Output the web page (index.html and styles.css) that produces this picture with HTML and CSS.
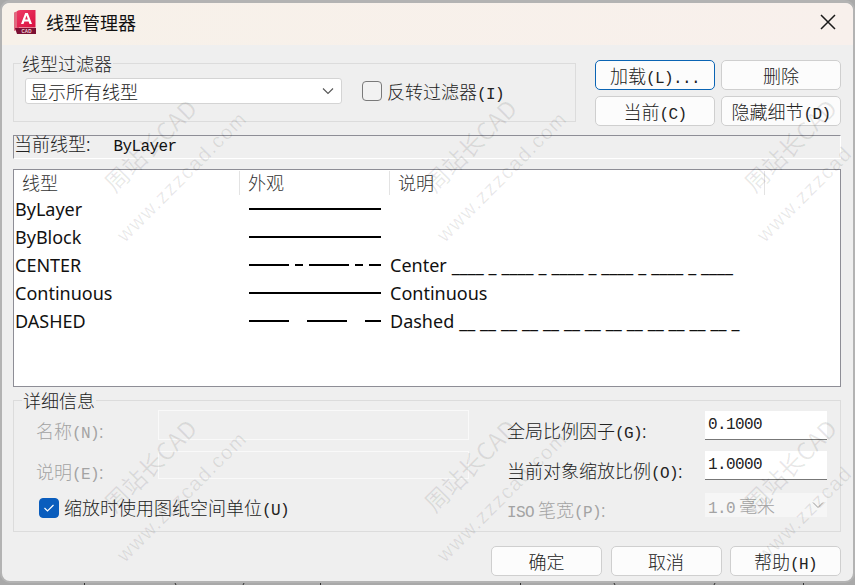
FILE: index.html
```html
<!DOCTYPE html>
<html lang="zh-CN">
<head>
<meta charset="utf-8">
<title>线型管理器</title>
<link rel="stylesheet" href="styles.css">
</head>
<body>
<div class="window">
  <header class="titlebar">
    <svg class="app-icon" width="22" height="24" viewBox="0 0 22 24">
      <defs><linearGradient id="red" x1="0" y1="0" x2="1" y2="1"><stop offset="0" stop-color="#ee3a66"/><stop offset="1" stop-color="#d9103f"/></linearGradient></defs>
      <path d="M0 2.5 L5 0.5 V19 L0 21 Z" fill="#e06a80"/>
      <path d="M3 1 L6 0 H21.5 V17.5 H3 Z" fill="url(#red)"/>
      <path d="M1 18 H22 V24 H3 Z" fill="#7c1033"/>
      <path d="M7 14 L11.2 3 h2.6 L18 14 h-2.5 l-.9-2.5 h-4.2 l-.9 2.5 Z M11.1 9.4 h2.8 L12.5 5.5 Z" fill="#fff" fill-rule="evenodd"/>
      <text x="12.5" y="23" class="app-icon-text">CAD</text>
    </svg>
    <span class="title-text">线型管理器</span>
    <svg class="close" width="16" height="16" viewBox="0 0 16 16"><path d="M1 1 L15 15 M15 1 L1 15" stroke="#1a1a1a" stroke-width="1.5" fill="none"/></svg>
  </header>

  <div class="body">
    <section class="top">
      <fieldset class="group filter">
        <legend>线型过滤器</legend>
        <div class="filter-row">
          <div class="select"><span>显示所有线型</span>
            <svg width="12" height="8" viewBox="0 0 12 8"><path d="M1 1.5 L6 6.5 L11 1.5" stroke="#555" stroke-width="1.1" fill="none"/></svg>
          </div>
          <label class="check"><span class="box"></span><span>反转过滤器<b class="l">(I)</b></span></label>
        </div>
      </fieldset>
      <div class="btn-grid">
        <button class="btn primary">加载<b class="l">(L)...</b></button>
        <button class="btn">删除</button>
        <button class="btn">当前<b class="l">(C)</b></button>
        <button class="btn">隐藏细节<b class="l">(D)</b></button>
      </div>
    </section>

    <div class="current">当前线型:<b class="l current-val">ByLayer</b></div>

    <section class="list">
      <div class="list-head">
        <div class="th">线型</div>
        <div class="th">外观</div>
        <div class="th">说明</div>
        <div class="th"></div>
      </div>
      <div class="row">
        <div class="name">ByLayer</div>
        <svg class="look" width="132" height="2"><path d="M0 1H132" class="ln"/></svg>
        <div class="desc"></div>
      </div>
      <div class="row">
        <div class="name">ByBlock</div>
        <svg class="look" width="132" height="2"><path d="M0 1H132" class="ln"/></svg>
        <div class="desc"></div>
      </div>
      <div class="row">
        <div class="name">CENTER</div>
        <svg class="look" width="132" height="2"><path d="M0 1H40M46 1H54M60 1H100M106 1H114M120 1H132" class="ln"/></svg>
        <div class="desc">Center ____ _ ____ _ ____ _ ____ _ ____ _ ____</div>
      </div>
      <div class="row">
        <div class="name">Continuous</div>
        <svg class="look" width="132" height="2"><path d="M0 1H132" class="ln"/></svg>
        <div class="desc">Continuous</div>
      </div>
      <div class="row">
        <div class="name">DASHED</div>
        <svg class="look" width="132" height="2"><path d="M0 1H40M58 1H98M116 1H132" class="ln"/></svg>
        <div class="desc">Dashed __ __ __ __ __ __ __ __ __ __ __ __ __ _</div>
      </div>
    </section>

    <fieldset class="group details">
      <legend>详细信息</legend>
      <div class="details-grid">
        <div class="details-left">
          <div class="field"><span class="flabel off">名称<b class="l">(N)</b>:</span><div class="ghost"></div></div>
          <div class="field"><span class="flabel off">说明<b class="l">(E)</b>:</span><div class="ghost"></div></div>
          <label class="check paper"><span class="box on"><svg width="12" height="10" viewBox="0 0 12 10"><path d="M1.5 5 L4.5 8 L10.5 2" stroke="#fff" stroke-width="1.2" fill="none"/></svg></span><span>缩放时使用图纸空间单位<b class="l">(U)</b></span></label>
        </div>
        <div class="details-right">
          <div class="rfield"><span class="rlabel">全局比例因子<b class="l">(G)</b>:</span><div class="input">0.1000</div></div>
          <div class="rfield"><span class="rlabel">当前对象缩放比例<b class="l">(O)</b>:</span><div class="input">1.0000</div></div>
          <div class="rfield iso"><span class="rlabel off"><b class="l">ISO</b> 笔宽<b class="l">(P)</b>:</span><div class="input disabled"><span><b class="l">1.0</b> 毫米</span>
            <svg width="12" height="8" viewBox="0 0 12 8"><path d="M1 1.5 L6 6.5 L11 1.5" stroke="#999" stroke-width="1" fill="none"/></svg></div></div>
        </div>
      </div>
    </fieldset>

    <footer class="actions">
      <button class="btn">确定</button>
      <button class="btn">取消</button>
      <button class="btn">帮助<b class="l">(H)</b></button>
    </footer>
  </div>

  <div class="marks" aria-hidden="true">
    <span class="wm wm1 a1">周站长CAD</span><span class="wm wm2 a1">www.zzzcad.com</span>
    <span class="wm wm1 a2">周站长CAD</span><span class="wm wm2 a2">www.zzzcad.com</span>
    <span class="wm wm1 a3">周站长CAD</span><span class="wm wm2 a3">www.zzzcad.com</span>
    <span class="wm wm1 b1">周站长CAD</span><span class="wm wm2 b1">www.zzzcad.com</span>
    <span class="wm wm1 b2">周站长CAD</span><span class="wm wm2 b2">www.zzzcad.com</span>
    <span class="wm wm1 b3">周站长CAD</span><span class="wm wm2 b3">www.zzzcad.com</span>
  </div>
</div>
<svg class="backdrop" width="855" height="2" viewBox="0 0 855 2"><path d="M84.500 0V2M175 0l1 2M243 2l1-2M320.500 0V2M520.500 0V2M614 0l1 2M714 2l1-2M803.500 0V2" stroke="#333" fill="none"/></svg>
</body>
</html>
```

FILE: styles.css
```css
* { box-sizing: border-box; }
html, body { margin: 0; padding: 0; }
body {
  width: 855px; height: 585px; overflow: hidden;
  background: #a9a9a9;
  font: 18px/24px "Noto Sans CJK SC", sans-serif;
  font-weight: 300;
  color: #222;
}
.l {
  font: 400 16px "Liberation Mono", monospace;
  letter-spacing: -.6px;
  color: inherit;
}
.backdrop { display: block; }

.window {
  position: relative;
  width: 855px; height: 583px;
  background: #efefef;
  border: 2px solid #b3b3b3;
  border-top-width: 3px;
  border-radius: 10px;
  overflow: hidden;
}
.titlebar {
  height: 42px;
  display: flex; align-items: center;
  padding: 0 17px 4px 12px;
  background: linear-gradient(90deg, #f7f1e9, #f8f0ec);
  color: #111;
}
.app-icon { flex: none; }
.app-icon-text { font: 700 4.6px "Liberation Sans", sans-serif; fill: #f3d7dc; text-anchor: middle; }
.title-text { margin-left: 10px; font-weight: 400; }
.close { margin-left: auto; }

.body { padding: 6px 12px 0 11px; }

.top { display: flex; justify-content: space-between; height: 76px; }

.group {
  margin: 0; padding: 0;
  border: 1px solid #dcdcdc;
  min-width: 0;
}
.group legend {
  padding: 0 1px;
  line-height: 24px; color: #222;
}
.filter { width: 563px; height: 71px; padding: 0 11px; }
.filter legend { margin-left: -4px; }
.filter-row { display: flex; align-items: center; margin-top: 3px; gap: 20px; }
.select {
  width: 317px; height: 26px;
  display: flex; align-items: center; justify-content: space-between;
  padding: 0 7px 0 4px;
  background: #fff; border: 1px solid #d4d4d4; border-radius: 3px;
}
.check { display: flex; align-items: center; gap: 5px; }
.box {
  flex: none; width: 20px; height: 20px;
  display: flex; align-items: center; justify-content: center;
  border: 1px solid #7a7a7a; border-radius: 4px; background: #f2f2f2;
}
.box.on { background: #0a5dbd; border-color: #0a5dbd; }

.btn-grid {
  width: 246px;
  display: grid; grid-template-columns: 120px 120px; grid-auto-rows: 30px;
  gap: 6px;
  margin-top: 9px;
}
.btn {
  padding: 0; margin: 0;
  font: inherit; color: #222;
  background: #fcfcfc;
  border: 1px solid #cfcfcf; border-radius: 5px;
}
.btn.primary { border: 1px solid #0a64b4; }

.current {
  height: 24px; margin-top: 8px;
  border: 1px solid #8e8e96; border-right-color: #fff; border-bottom-color: #fff;
  line-height: 14px;
}
.current-val { margin-left: 23px; color: #111; }

.list {
  height: 218px; margin-top: 10px;
  background: #fff;
  border: 1px solid #8e8e96;
}
.list-head {
  display: grid; grid-template-columns: 226px 150px 375px 1fr;
  height: 25px;
}
.th {
  padding-left: 8px; line-height: 22px; color: #333;
  border-right: 1px solid #e3e3e3; height: 24px; margin-top: 1px;
}
.th:last-child { border-right: 0; }
.row {
  display: grid; grid-template-columns: 234px 141px 1fr; align-items: center;
  height: 28px; padding-left: 1px;
  font: 400 18px/28px "Noto Sans", sans-serif; color: #111;
}
.look { display: block; }
.ln { stroke: #000; stroke-width: 2; fill: none; }
.desc { white-space: pre; word-spacing: .28px; }

.details { height: 144px; margin-top: 1px; padding: 0 13px 0 23px; }
.details legend { margin-left: -15px; }
.details-grid { display: flex; justify-content: space-between; }
.details-left { width: 432px; margin-top: -2px; }
.field { display: flex; height: 30px; margin-bottom: 11px; }
.flabel { width: 121px; margin: 8px 0 0 -1px; }
.off { color: #a3a3a3; }
.ghost { width: 311px; height: 30px; border: 1px solid #f9f9f9; margin-left: 1px; }
.field + .field .ghost { height: 28px; }
.paper { margin-left: 2px; margin-top: 14px; }

.details-right { width: 320px; margin-top: -1px; }
.rfield { display: flex; justify-content: space-between; height: 29px; margin-bottom: 11px; }
.rlabel { margin-top: 7px; }
.iso { margin-top: 13px; height: 24px; }
.iso .rlabel { margin-top: 4px; }
.input {
  width: 122px; height: 29px; padding: 0 3px;
  display: flex; align-items: center; justify-content: space-between;
  background: #fff; border-bottom: 1px solid #777;
  font: 400 16px "Liberation Mono", monospace; letter-spacing: -.6px; color: #222;
}
.input.disabled {
  height: 24px; background: #f6f6f6; border-bottom: 0;
  font: inherit; letter-spacing: 0; color: #a3a3a3;
}

.actions {
  display: grid; grid-template-columns: 111px 111px 111px;
  justify-content: end; column-gap: 8.5px; grid-auto-rows: 30px;
  margin-top: 14px;
}

.marks { position: absolute; inset: -3px -2px; pointer-events: none; }
.wm { position: absolute; white-space: nowrap; transform: rotate(-45deg); transform-origin: 0 50%; color: rgba(0,0,0,.09); }
.wm1 { font: 400 24px/30px "Noto Sans CJK SC", sans-serif; }
.wm2 { font: 400 20px/24px "Liberation Sans", sans-serif; letter-spacing: 1.5px; }
.wm1.a1 { left: 108px; top: 172px; } .wm2.a1 { left: 120px; top: 226px; }
.wm1.a2 { left: 428px; top: 172px; } .wm2.a2 { left: 440px; top: 226px; }
.wm1.a3 { left: 748px; top: 172px; } .wm2.a3 { left: 760px; top: 226px; }
.wm1.b1 { left: 108px; top: 492px; } .wm2.b1 { left: 120px; top: 546px; }
.wm1.b2 { left: 428px; top: 492px; } .wm2.b2 { left: 440px; top: 546px; }
.wm1.b3 { left: 748px; top: 492px; } .wm2.b3 { left: 760px; top: 546px; }
```
